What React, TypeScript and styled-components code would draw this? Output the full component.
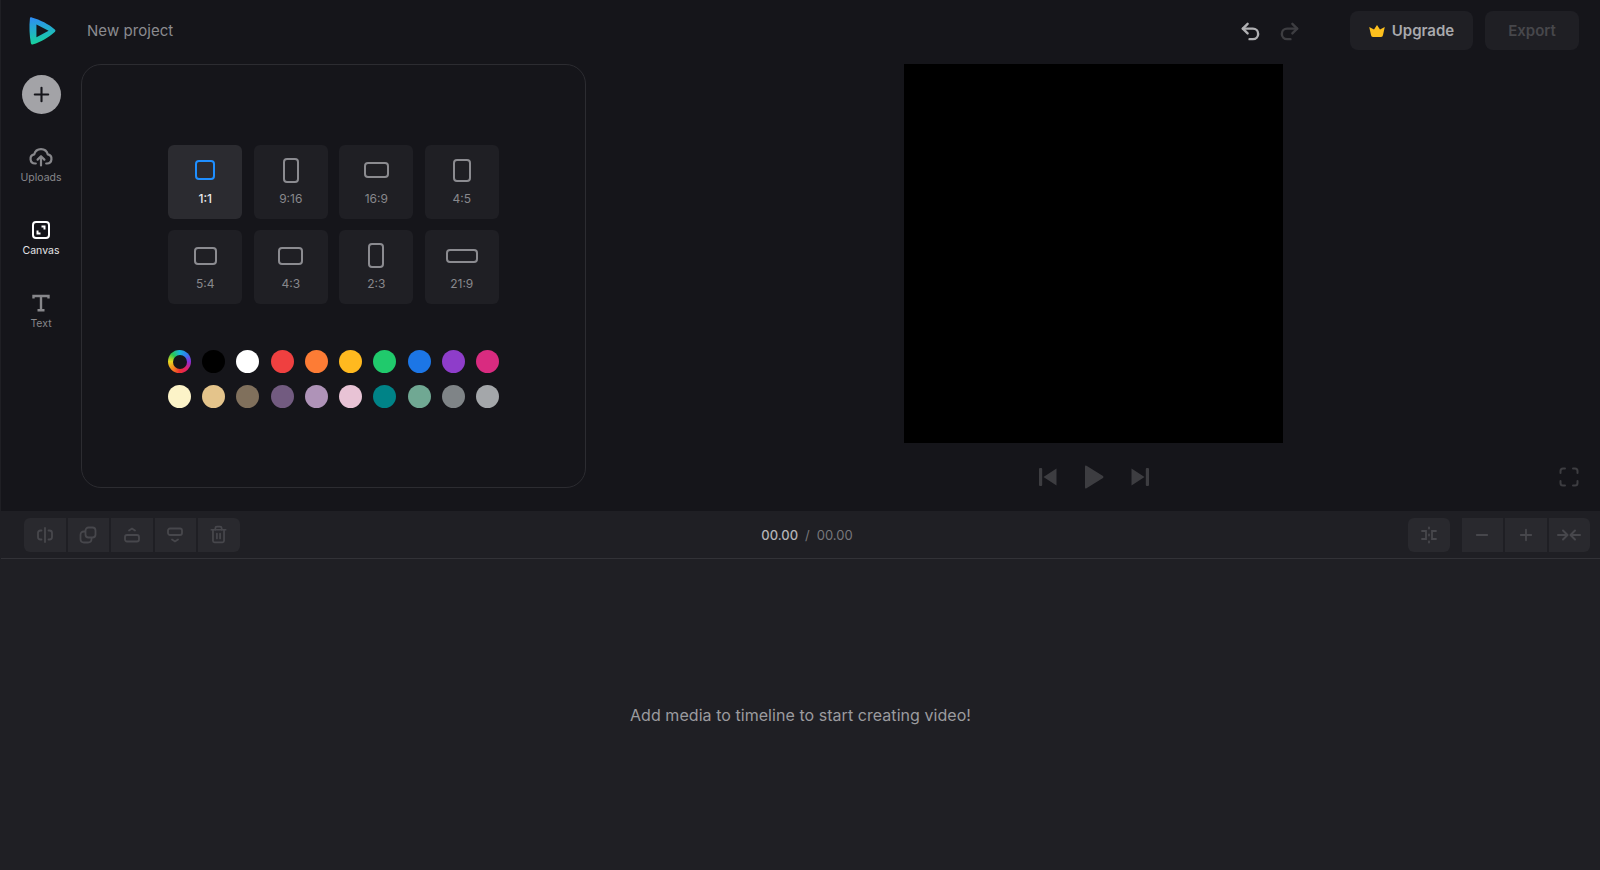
import { createGlobalStyle } from "styled-components"
import styled from "styled-components"
import { Minus, Plus, Redo2, Trash2, Undo2 } from "lucide-react"

const Global = createGlobalStyle`
  html, body { margin: 0; padding: 0; background: #15151a; }
  body { font-family: Inter, "Noto Sans", sans-serif; }
  * { box-sizing: border-box; }
`

const Page = styled.div`
  height: 870px; width: 1600px; overflow: hidden;
  display: flex; flex-direction: column;
  background: #15151a; border-left: 1px solid #1f1f24;
`
const Header = styled.header`
  height: 64px; flex: none; padding-bottom: 3px;
  display: flex; align-items: center;
`
const LogoCell = styled.div`width: 86px; padding-left: 28px; display: flex; align-items: center;`
const ProjectName = styled.span`flex: 1; font-size: 15px; color: #8b8b8f; letter-spacing: 0.05px;`
const HistoryIcons = styled.div`display: flex; align-items: center; gap: 16px; margin-right: 49px; padding-top: 2px;`
const HistoryBtn = styled.span<{ $off?: boolean }>`
  display: flex; color: ${p => p.$off ? "#3d3d41" : "#b0b0b3"};
`
const UpgradeBtn = styled.div`
  width: 123px; height: 39px; border-radius: 8px; background: #1f1f24;
  display: flex; align-items: center; justify-content: center; gap: 7px;
  color: #a9a9ad; font-size: 15px; font-weight: 600;
`
const ExportBtn = styled.div`
  width: 94px; height: 39px; border-radius: 8px; background: #1f1f24; margin: 0 21px 0 12px;
  display: flex; align-items: center; justify-content: center;
  color: #47474b; font-size: 15px; font-weight: 600;
`

const Main = styled.div`height: 447px; flex: none; display: flex;`
const Sidebar = styled.nav`
  width: 80px; flex: none; padding-top: 11px;
  display: flex; flex-direction: column; align-items: center;
`
const AddBtn = styled.div`
  width: 39px; height: 39px; border-radius: 50%; background: #a3a3a7; color: #15151a;
  display: flex; align-items: center; justify-content: center; margin-bottom: 15px;
`
const NavItem = styled.div<{ $active?: boolean }>`
  height: 73px; display: flex; flex-direction: column; align-items: center; justify-content: center; gap: 5px;
  font-size: 10.5px; color: ${p => p.$active ? "#e4e4e6" : "#87878b"};
`
const Panel = styled.section`
  width: 505px; height: 424px; flex: none;
  border: 1px solid #2c2c31; border-radius: 20px;
  display: flex; flex-direction: column; align-items: center; justify-content: center; gap: 46px;
`
const RatioGrid = styled.div`display: grid; grid-template-columns: repeat(4, 74px); gap: 11.5px;`
const RatioTile = styled.div<{ $active?: boolean }>`
  height: 74px; border-radius: 6px;
  background: ${p => p.$active ? "#2b2b30" : "#1f1f24"};
  color: ${p => p.$active ? "#e9e9eb" : "#88888c"};
  font-size: 12px; font-weight: ${p => p.$active ? 500 : 400};
  display: flex; flex-direction: column; align-items: center;
`
const RatioShapeBox = styled.div`height: 46px; padding-top: 5px; flex: none; display: flex; align-items: center; justify-content: center;`
const RatioShape = styled.div<{ $w: number; $h: number; $active?: boolean }>`
  width: ${p => p.$w}px; height: ${p => p.$h}px; border-radius: 4px;
  border: 2px solid ${p => p.$active ? "#1f8fff" : "#8b8b90"};
`
const Swatches = styled.div`display: grid; grid-template-columns: repeat(10, 23px); justify-content: space-between; row-gap: 11.5px; width: 331px;`
const Swatch = styled.div<{ $c: string }>`
  width: 23px; height: 23px; border-radius: 50%; background: ${p => p.$c};
`
const WheelSwatch = styled.div`
  width: 23px; height: 23px; border-radius: 50%; padding: 4.5px;
  background: conic-gradient(#19b5d8, #2f7df0, #8a2fd8, #e0206a, #ee3030, #f58a1f, #e8d820, #28c850, #19b5d8);
  &::after { content: ""; display: block; width: 14px; height: 14px; border-radius: 50%; background: #15151a; }
`

const Stage = styled.div`flex: 1; padding-left: 1px; display: flex; flex-direction: column; align-items: center;`
const Preview = styled.div`width: 379px; height: 379px; background: #000; flex: none;`
const Controls = styled.div`
  width: 100%; height: 68px;
  display: grid; grid-template-columns: 1fr auto 1fr; align-items: center;
  color: #3d3d41;
`
const Transport = styled.div`grid-column: 2; display: flex; align-items: center; gap: 27px;`
const FullscreenIcon = styled.div`justify-self: end; margin-right: 21px; display: flex;`

const Toolbar = styled.div`
  height: 48px; flex: none; padding: 0 10px 0 23px;
  background: #1f1f24; border-bottom: 1px solid #323237;
  display: grid; grid-template-columns: 1fr auto 1fr; align-items: center;
`
const ToolGroup = styled.div<{ $end?: boolean }>`
  display: flex; gap: 2px; justify-content: ${p => p.$end ? "flex-end" : "flex-start"};
`
const ToolBtn = styled.div`
  width: 41.5px; height: 34px; background: #29292e; color: #47474c;
  display: flex; align-items: center; justify-content: center;
  &:first-child { border-radius: 6px 0 0 6px; }
  &:last-child { border-radius: 0 6px 6px 0; }
`
const SoloBtn = styled(ToolBtn)`&& { border-radius: 6px; margin-right: 10px; }`
const TimeText = styled.div`
  font-size: 13px; color: #77777b; display: flex; gap: 7px;
`
const TimeNow = styled.span`color: #b4b4b7; font-weight: 500;`
const Timeline = styled.div`
  flex: 1; background: #1f1f24; display: flex; align-items: center; justify-content: center;
  font-size: 16px; color: #9b9b9f; letter-spacing: 0.05px;
`

const RATIOS = [
  { label: "1:1", w: 20, h: 20 },
  { label: "9:16", w: 16, h: 25 },
  { label: "16:9", w: 25, h: 16 },
  { label: "4:5", w: 18, h: 23 },
  { label: "5:4", w: 23, h: 18 },
  { label: "4:3", w: 25, h: 18 },
  { label: "2:3", w: 16, h: 25 },
  { label: "21:9", w: 32, h: 14 },
]
const COLORS_A = ["#000000", "#ffffff", "#ef4040", "#fd7c35", "#ffb91f", "#20ca6c", "#1c76e6", "#8e3dca", "#d92b80"]
const COLORS_B = ["#fcf3c8", "#e4c48b", "#80705c", "#725b80", "#af93b8", "#e8c3d5", "#008387", "#70a893", "#7f8487", "#a4a7aa"]

function Logo() {
  return (
    <svg width="28" height="30" viewBox="0 0 30 32">
      <defs>
        <linearGradient id="lg" x1="0.3" y1="0" x2="0.4" y2="1">
          <stop offset="0" stopColor="#2e8df5" />
          <stop offset="1" stopColor="#16d49a" />
        </linearGradient>
      </defs>
      <path d="M3 1.5 C2 1 1 1.5 1 2.6 C0 11 0.5 21 2 29 C2.3 30.4 3.4 30.8 4.6 30.3 C12 28 21 23 27.6 17 C28.6 16 28.5 15 27.6 14.3 C21 8.5 12 4 3 1.5 Z" fill="url(#lg)" />
      <path d="M8 9 L21 15.7 L8 22.8 Z" fill="#15151a" />
    </svg>
  )
}

function UploadIcon() {
  return (
    <svg width="24" height="18" viewBox="0 0 24 18" fill="none" stroke="#87878b" strokeWidth="2.2" strokeLinecap="round" strokeLinejoin="round" style={{ overflow: "visible" }}>
      <path d="M6.8 15.5 H6 A4.6 4.6 0 0 1 5.2 6.4 A7 7 0 0 1 18.8 6.4 A4.6 4.6 0 0 1 18 15.5 H17.2" />
      <path d="M12 17.5 V8.5 M8.6 11.6 L12 8.2 L15.4 11.6" />
    </svg>
  )
}

function CanvasIcon() {
  return (
    <svg width="18" height="18" viewBox="0 0 18 18" fill="none" stroke="#fff">
      <rect x="1" y="1" width="16" height="16" rx="3" strokeWidth="2" />
      <path d="M5.5 9.5 V12.5 H8.5 M12.5 8.5 V5.5 H9.5" strokeWidth="2" />
    </svg>
  )
}

function TextIcon() {
  return (
    <svg width="18" height="18" viewBox="0 0 18 18" fill="none" stroke="#87878b" strokeWidth="2.4">
      <path d="M1.5 4.5 V2 H16.5 V4.5 M9 2 V16 M5.5 16.2 H12.5" />
    </svg>
  )
}

function CrownIcon() {
  return (
    <svg width="16" height="12" viewBox="0 0 16 12" fill="#fdc01e">
      <path d="M8 0 L11 4.4 L15.8 2 L14 10 Q13.8 12 12 12 H4 Q2.2 12 2 10 L0.2 2 L5 4.4 Z" />
    </svg>
  )
}

function SplitIcon() {
  return (
    <svg width="18" height="18" viewBox="0 0 18 18" fill="none" stroke="currentColor" strokeWidth="1.8" strokeLinecap="round">
      <path d="M9 2 V16 M5.5 4.5 H4.5 Q2 4.5 2 7 V11 Q2 13.5 4.5 13.5 H5.5 M12.5 4.5 H13.5 Q16 4.5 16 7 V11 Q16 13.5 13.5 13.5 H12.5" />
    </svg>
  )
}

function DuplicateIcon() {
  return (
    <svg width="18" height="18" viewBox="0 0 18 18" fill="none" stroke="currentColor" strokeWidth="1.8">
      <rect x="6.5" y="1.5" width="10" height="10" rx="3" />
      <path d="M6.5 5.5 H5 Q1.5 5.5 1.5 9 V13 Q1.5 16.5 5 16.5 H9 Q12.5 16.5 12.5 13 V11.5" />
    </svg>
  )
}

function LayerUpIcon() {
  return (
    <svg width="18" height="18" viewBox="0 0 18 18" fill="none" stroke="currentColor" strokeWidth="1.8" strokeLinecap="round">
      <path d="M6 4.5 L9 2.5 L12 4.5" />
      <rect x="2" y="9" width="14" height="6.5" rx="2" />
    </svg>
  )
}

function LayerDownIcon() {
  return (
    <svg width="18" height="18" viewBox="0 0 18 18" fill="none" stroke="currentColor" strokeWidth="1.8" strokeLinecap="round">
      <rect x="2" y="2.5" width="14" height="6.5" rx="2" />
      <path d="M6 13.5 L9 15.5 L12 13.5" />
    </svg>
  )
}

function SnapIcon() {
  return (
    <svg width="18" height="18" viewBox="0 0 18 18" fill="none" stroke="currentColor" strokeWidth="1.8" strokeLinecap="round">
      <path d="M9 1.5 V2.5 M9 8.5 V9.5 M9 15.5 V16.5 M2 5 H6 V13 H2 M16 5 H12 V13 H16" />
    </svg>
  )
}

function FitIcon() {
  return (
    <svg width="24" height="14" viewBox="0 0 24 14" fill="none" stroke="currentColor" strokeWidth="2" strokeLinecap="round" strokeLinejoin="round">
      <path d="M1 7 H10 M6 2.5 L10.5 7 L6 11.5 M23 7 H14 M18 2.5 L13.5 7 L18 11.5" />
    </svg>
  )
}

function PrevIcon() {
  return (
    <svg width="18" height="20" viewBox="0 0 18 20" fill="currentColor">
      <rect x="0" y="1" width="3.2" height="18" rx="1" />
      <path d="M17.5 1.5 V18.5 L4.5 10 Z" />
    </svg>
  )
}

function NextIcon() {
  return (
    <svg width="18" height="20" viewBox="0 0 18 20" fill="currentColor">
      <rect x="14.8" y="1" width="3.2" height="18" rx="1" />
      <path d="M0.5 1.5 V18.5 L13.5 10 Z" />
    </svg>
  )
}

function PlayIcon() {
  return (
    <svg width="20" height="24" viewBox="0 0 20 24" fill="currentColor">
      <path d="M1 1.5 Q1 0 2.5 0.8 L19 11 Q20 12 19 13 L2.5 23.2 Q1 24 1 22.5 Z" />
    </svg>
  )
}

function FullscreenGlyph() {
  return (
    <svg width="20" height="20" viewBox="0 0 20 20" fill="none" stroke="currentColor" strokeWidth="2" strokeLinecap="round">
      <path d="M1.5 6 V4 Q1.5 1.5 4 1.5 H6 M14 1.5 H16 Q18.5 1.5 18.5 4 V6 M18.5 14 V16 Q18.5 18.5 16 18.5 H14 M6 18.5 H4 Q1.5 18.5 1.5 16 V14" />
    </svg>
  )
}

export default function App() {
  return (
    <Page>
      <Global />
      <Header>
        <LogoCell><Logo /></LogoCell>
        <ProjectName>New project</ProjectName>
        <HistoryIcons>
          <HistoryBtn><Undo2 size={23} strokeWidth={2.5} /></HistoryBtn>
          <HistoryBtn $off><Redo2 size={23} strokeWidth={2.5} /></HistoryBtn>
        </HistoryIcons>
        <UpgradeBtn>
          <CrownIcon />
          Upgrade
        </UpgradeBtn>
        <ExportBtn>Export</ExportBtn>
      </Header>

      <Main>
        <Sidebar>
          <AddBtn><Plus size={23} strokeWidth={2.2} /></AddBtn>
          <NavItem>
            <UploadIcon />
            Uploads
          </NavItem>
          <NavItem $active>
            <CanvasIcon />
            Canvas
          </NavItem>
          <NavItem>
            <TextIcon />
            Text
          </NavItem>
        </Sidebar>

        <Panel>
          <RatioGrid>
            {RATIOS.map((r, i) => (
              <RatioTile key={r.label} $active={i === 0}>
                <RatioShapeBox>
                  <RatioShape $w={r.w} $h={r.h} $active={i === 0} />
                </RatioShapeBox>
                {r.label}
              </RatioTile>
            ))}
          </RatioGrid>
          <Swatches>
            <WheelSwatch />
            {COLORS_A.map(c => <Swatch key={c} $c={c} />)}
            {COLORS_B.map(c => <Swatch key={c} $c={c} />)}
          </Swatches>
        </Panel>

        <Stage>
          <Preview />
          <Controls>
            <Transport>
              <PrevIcon />
              <PlayIcon />
              <NextIcon />
            </Transport>
            <FullscreenIcon><FullscreenGlyph /></FullscreenIcon>
          </Controls>
        </Stage>
      </Main>

      <Toolbar>
        <ToolGroup>
          <ToolBtn><SplitIcon /></ToolBtn>
          <ToolBtn><DuplicateIcon /></ToolBtn>
          <ToolBtn><LayerUpIcon /></ToolBtn>
          <ToolBtn><LayerDownIcon /></ToolBtn>
          <ToolBtn><Trash2 size={19} strokeWidth={2.2} /></ToolBtn>
        </ToolGroup>
        <TimeText>
          <TimeNow>00.00</TimeNow>
          <span>/</span>
          <span>00.00</span>
        </TimeText>
        <ToolGroup $end>
          <SoloBtn><SnapIcon /></SoloBtn>
          <ToolBtn><Minus size={18} strokeWidth={2.4} /></ToolBtn>
          <ToolBtn><Plus size={18} strokeWidth={2.4} /></ToolBtn>
          <ToolBtn><FitIcon /></ToolBtn>
        </ToolGroup>
      </Toolbar>

      <Timeline>Add media to timeline to start creating video!</Timeline>
    </Page>
  )
}
